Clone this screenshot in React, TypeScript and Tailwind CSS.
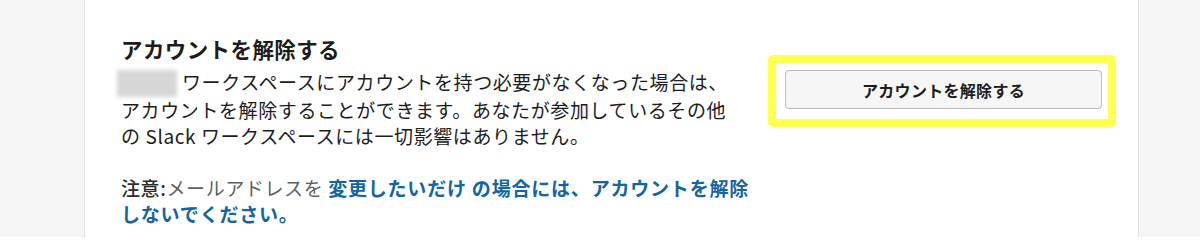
import React from 'react';

const FONT = "font-['Noto_Sans_CJK_JP','Noto_Sans',sans-serif]";

export default function App() {
  return (
    <div className={`flex h-[237px] w-full overflow-hidden bg-[#f5f5f5] ${FONT}`}>
      <div className="w-[84px] shrink-0" />

      {/* Settings panel */}
      <div className="flex w-[1055px] shrink-0 border-x border-[#e2e2e2] bg-white pl-[36px] pt-[35px]">
        <div className="w-[640px] shrink-0">
          <h2 className="text-[21.5px] font-bold leading-[28px] tracking-[0.4px] text-[#1d1c1d]">アカウントを解除する</h2>

          <p className="mt-[6px] text-[19px] leading-[26px] tracking-[0.6px] text-[#1d1c1d]">
            <span className="-ml-[4px] mr-[5px] inline-block h-[27px] w-[60px] bg-[#d6d6d6] align-[-7px] blur-[2px]" />
            ワークスペースにアカウントを持つ必要がなくなった場合は、
            <br />
            アカウントを解除することができます。あなたが参加しているその他
            <br />
            の Slack ワークスペースには一切影響はありません。
          </p>

          <p className="mt-[26px] text-[19px] leading-[26px] tracking-[0.6px]">
            <span className="font-medium text-[#2c2c2c]">注意:</span>
            <span className="text-[#616061]">メールアドレスを </span>
            <a className="font-bold tracking-[0.8px] text-[#1264a3]">変更したいだけ の場合には、アカウントを解除</a>
            <br />
            <a className="font-bold tracking-[0.8px] text-[#1264a3]">しないでください。</a>
          </p>
        </div>

        {/* Highlighted action */}
        <div className="ml-[7px] mt-[20px] h-[72px] w-[348px] shrink-0 rounded-[5px] border-[8px] border-[#ffff50] bg-white pl-[9px] pt-[7px]">
          <button className="flex h-[39px] w-[317px] items-center justify-center rounded-[4px] border border-[#bdbdbd] bg-[#f6f6f6] text-[16px] font-bold tracking-[0.3px] text-[#1d1c1d]">
            アカウントを解除する
          </button>
        </div>
      </div>

      <div className="flex-1" />
    </div>
  );
}
